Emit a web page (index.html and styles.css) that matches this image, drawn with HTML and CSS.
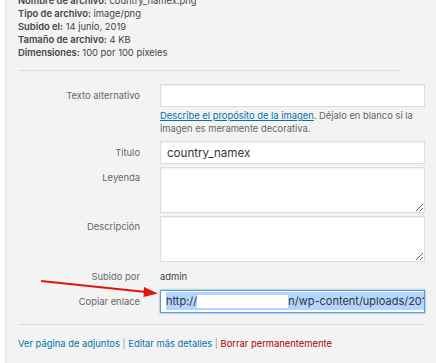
FILE: index.html
```html
<!DOCTYPE html>
<html lang="es">
<head>
    <meta charset="UTF-8">
    <title>Detalles del adjunto</title>
    <link rel="stylesheet" href="styles.css">
</head>
<body>
<div class="panel">

    <!-- datos del archivo -->
    <div class="meta">
        <div><strong>Nombre de archivo:</strong> country_namex.png</div>
        <div><strong>Tipo de archivo:</strong> image/png</div>
        <div><strong>Subido el:</strong> 14 junio, 2019</div>
        <div><strong>Tamaño de archivo:</strong> 4 KB</div>
        <div><strong>Dimensiones:</strong> 100 por 100 píxeles</div>
    </div>

    <hr class="sep sep-top">

    <div class="settings">
        <div class="row">
            <label class="name name-mid">Texto alternativo</label>
            <div>
                <input class="field" type="text">
                <p class="desc"><a href="#">Describe el propósito de la imagen</a>. Déjalo en blanco si la imagen es meramente decorativa.</p>
            </div>
        </div>
        <div class="row row-title">
            <label class="name name-mid">Título</label>
            <input class="field" type="text" value="country_namex">
        </div>
        <div class="row">
            <label class="name name-top">Leyenda</label>
            <textarea class="field area"></textarea>
        </div>
        <div class="row">
            <label class="name name-top">Descripción</label>
            <textarea class="field area"></textarea>
        </div>
        <div class="row row-by">
            <span class="name">Subido por</span>
            <span class="value">admin</span>
        </div>
        <div class="row">
            <label class="name name-mid">Copiar enlace</label>
            <div class="field link-field"><span class="sel">http://<span class="blank"></span>n/wp-content/uploads/2019/06/country_namex.png</span></div>
        </div>
    </div>

    <hr class="sep sep-bottom">

    <div class="actions">
        <a href="#">Ver página de adjuntos</a> <span class="bar">|</span>
        <a href="#">Editar más detalles</a> <span class="bar">|</span>
        <a href="#" class="delete">Borrar permanentemente</a>
    </div>
</div>

<!-- flecha roja de la captura -->
<svg class="arrow" width="436" height="363" viewBox="0 0 436 363">
    <line x1="41" y1="281" x2="146" y2="292" stroke="#e3140f" stroke-width="2.2"/>
    <polygon points="158,293.5 144,287 143.5,297" fill="#e3140f"/>
</svg>
</body>
</html>
```

FILE: styles.css
```css
body {
    margin: 0;
    background: #fff;
    font-family: Inter, "Open Sans", sans-serif;
    color: #444;
}
.panel {
    margin-left: 5px;
    height: 363px;
    box-sizing: border-box;
    border-left: 1px solid #e2e2e2;
    background: #f3f3f3;
    padding: 0 11px 0 12px;
    overflow: hidden;
}
.meta {
    margin-top: -6px;
    font-size: 9.4px;
    line-height: 13px;
    color: #444;
}
.meta strong {
    font-weight: 600;
}
.sep {
    border: 0;
    border-top: 1px solid #dcdcdc;
    margin: 0;
}
.sep-top {
    margin-top: 11px;
    width: 382px;
}
.settings {
    margin-top: 13px;
}
.row {
    display: grid;
    grid-template-columns: 122px 265px;
    column-gap: 20px;
    margin-bottom: 3px;
}
.row-title {
    margin-top: 6px;
}
.name {
    text-align: right;
    font-size: 9.4px;
    line-height: 13px;
    color: #666;
}
.name-mid {
    padding-top: 5px;
}
.name-top {
    padding-top: 4px;
}
.field {
    display: block;
    box-sizing: border-box;
    width: 265px;
    height: 23px;
    margin: 0;
    border: 1px solid #dcdcdc;
    background: #fff;
    box-shadow: inset 0 1px 2px rgba(0, 0, 0, .06);
    font-family: Inter, "Open Sans", sans-serif;
    font-size: 11.6px;
    color: #32373c;
    padding: 0 6px;
    outline: none;
}
.area {
    height: 46px;
    resize: vertical;
}
.desc {
    margin: 2px 0 0;
    font-size: 9.4px;
    line-height: 13px;
    color: #666;
}
.desc a {
    color: #0073aa;
}
.row-by {
    margin: 8px 0 7px;
}
.value {
    font-size: 9.4px;
    line-height: 13px;
    color: #444;
}
.link-field {
    border-color: #5b9dd9;
    box-shadow: 0 0 2px rgba(30, 140, 190, .8);
    white-space: nowrap;
    overflow: hidden;
    line-height: 21px;
    padding-left: 5px;
    font-size: 11px;
}
.sel {
    background: #b4d5fe;
    padding: 2px 0;
}
.blank {
    display: inline-block;
    width: 91px;
    height: 13px;
    background: #fff;
    vertical-align: -3px;
}
.sep-bottom {
    margin-top: 11px;
    width: 407px;
}
.actions {
    margin-top: 12px;
    font-size: 9.4px;
    line-height: 13px;
}
.actions a {
    color: #0073aa;
    text-decoration: none;
}
.actions .delete {
    color: #a00;
}
.bar {
    color: #999;
}
.arrow {
    position: absolute;
    left: 0;
    top: 0;
}
```
